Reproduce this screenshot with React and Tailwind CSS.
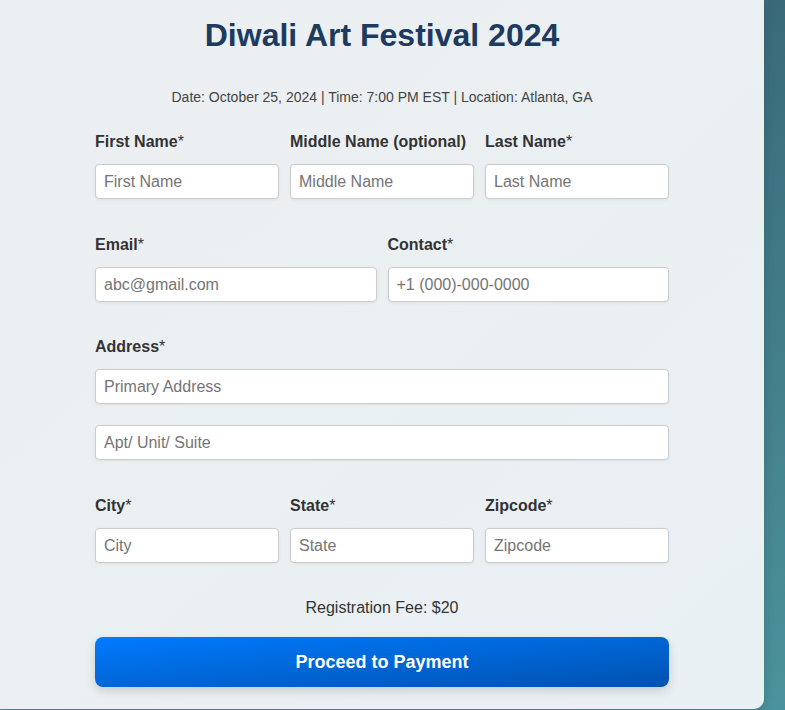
import React from 'react';

const inputCls =
  'h-[35px] w-full rounded-[4px] border border-[#ccc] bg-white px-2 text-base text-[#333] placeholder:text-[#757575] shadow-[0_1px_3px_rgba(0,0,0,0.06)] outline-none';

const Field = ({ label, required, placeholder, type = 'text' }) => (
  <div className="flex flex-col">
    <label className="mb-[13px] text-base leading-[18px] font-bold text-[#333]">
      {label}
      {required && <span className="font-normal">*</span>}
    </label>
    <input type={type} placeholder={placeholder} className={inputCls} />
  </div>
);

export default function App() {
  return (
    <div className="min-h-[710px] w-full bg-gradient-to-b from-[#3a6a7a] to-[#4b939c] font-['Liberation_Sans',Arial,sans-serif]">
      <div className="w-[764px] rounded-br-[10px] bg-gradient-to-br from-[#eceff1] to-[#e9f0f3] px-[95px] pt-4 pb-[22px] shadow-[0_4px_12px_rgba(0,0,0,0.15)]">
        {/* Header */}
        <h1 className="text-center text-[32px] leading-[38px] font-bold text-[#1e3a5f]">Diwali Art Festival 2024</h1>
        <p className="mt-[33px] text-center text-sm leading-5 text-[#444]">
          Date: October 25, 2024 | Time: 7:00 PM EST | Location: Atlanta, GA
        </p>

        {/* Form */}
        <form className="mt-[26px] flex flex-col">
          <div className="grid grid-cols-3 gap-x-[11px]">
            <Field label="First Name" required placeholder="First Name" />
            <Field label="Middle Name (optional)" placeholder="Middle Name" />
            <Field label="Last Name" required placeholder="Last Name" />
          </div>

          <div className="mt-[37px] grid grid-cols-2 gap-x-[11px]">
            <Field label="Email" required placeholder="abc@gmail.com" type="email" />
            <Field label="Contact" required placeholder="+1 (000)-000-0000" type="tel" />
          </div>

          <div className="mt-9 flex flex-col">
            <Field label="Address" required placeholder="Primary Address" />
            <input type="text" placeholder="Apt/ Unit/ Suite" className={`mt-[21px] ${inputCls}`} />
          </div>

          <div className="mt-[37px] grid grid-cols-3 gap-x-[11px]">
            <Field label="City" required placeholder="City" />
            <Field label="State" required placeholder="State" />
            <Field label="Zipcode" required placeholder="Zipcode" />
          </div>

          <p className="mt-9 text-center text-base leading-[18px] text-[#333]">Registration Fee: $20</p>

          <button
            type="button"
            className="mt-5 h-[50px] w-full rounded-lg bg-gradient-to-br from-[#007bff] to-[#0052b0] text-lg font-bold text-white shadow-[0_4px_10px_rgba(0,0,0,0.15)]"
          >
            Proceed to Payment
          </button>
        </form>
      </div>
    </div>
  );
}
